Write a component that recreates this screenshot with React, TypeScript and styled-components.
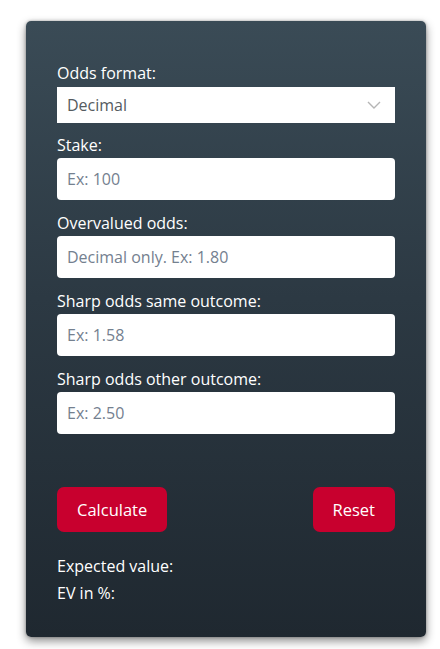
import React from "react";
import styled, { createGlobalStyle } from "styled-components";

const Global = createGlobalStyle`
  html, body { margin: 0; padding: 0; background: #ffffff; }
  * { box-sizing: border-box; }
`;

const Page = styled.div`
  padding: 21px 14px 12px 26px;
  font-family: "Open Sans", "Noto Sans", sans-serif;
`;

const Card = styled.div`
  width: 400px;
  height: 616px;
  border-radius: 5px;
  background: linear-gradient(180deg, #3a4b56 0%, #2c3943 45%, #1f2830 100%);
  box-shadow: 0 4px 10px rgba(0, 0, 0, 0.45), 0 0 3px rgba(0, 0, 0, 0.3);
  padding: 41px 31px 0 31px;
  display: flex;
  flex-direction: column;
`;

const Field = styled.div<{ $space?: number }>`
  display: flex;
  flex-direction: column;
  margin-bottom: ${(p) => p.$space ?? 12}px;
`;

const Label = styled.label<{ $gap?: number }>`
  color: #ffffff;
  font-size: 16px;
  line-height: 22px;
  margin-bottom: ${(p) => p.$gap ?? 2}px;
`;

const SelectBox = styled.div`
  height: 36px;
  background: #ffffff;
  display: flex;
  align-items: center;
  justify-content: space-between;
  padding: 0 14px 0 10px;
  color: #555b60;
  font-size: 16px;
`;

const Input = styled.input`
  height: 42px;
  width: 100%;
  border: none;
  border-radius: 4px;
  background: #ffffff;
  padding: 0 10px;
  font-family: inherit;
  font-size: 16px;
  outline: none;
  &::placeholder { color: #74808f; }
`;

const Buttons = styled.div`
  display: flex;
  justify-content: space-between;
  margin-top: 53px;
`;

const Button = styled.button`
  height: 45px;
  padding: 0 20px;
  border: none;
  border-radius: 7px;
  background: #c8002e;
  color: #ffffff;
  font-family: inherit;
  font-size: 16.5px;
`;

const Results = styled.div`
  margin-top: 21px;
  display: flex;
  flex-direction: column;
`;

const ResultLine = styled.div`
  color: #ffffff;
  font-size: 16px;
  line-height: 27px;
`;

const Chevron = () => (
  <svg width="14" height="8" viewBox="0 0 14 8" fill="none">
    <path d="M1 1 L7 7 L13 1" stroke="#b5b5b5" strokeWidth="1.4" />
  </svg>
);

export default function App() {
  return (
    <>
      <Global />
      <Page>
        <Card>
          <Field $space={11}>
            <Label $gap={3}>Odds format:</Label>
            <SelectBox>
              <span>Decimal</span>
              <Chevron />
            </SelectBox>
          </Field>
          <Field>
            <Label>Stake:</Label>
            <Input placeholder="Ex: 100" />
          </Field>
          <Field>
            <Label>Overvalued odds:</Label>
            <Input placeholder="Decimal only. Ex: 1.80" />
          </Field>
          <Field>
            <Label>Sharp odds same outcome:</Label>
            <Input placeholder="Ex: 1.58" />
          </Field>
          <Field $space={0}>
            <Label>Sharp odds other outcome:</Label>
            <Input placeholder="Ex: 2.50" />
          </Field>
          <Buttons>
            <Button>Calculate</Button>
            <Button>Reset</Button>
          </Buttons>
          <Results>
            <ResultLine>Expected value:</ResultLine>
            <ResultLine>EV in %:</ResultLine>
          </Results>
        </Card>
      </Page>
    </>
  );
}
